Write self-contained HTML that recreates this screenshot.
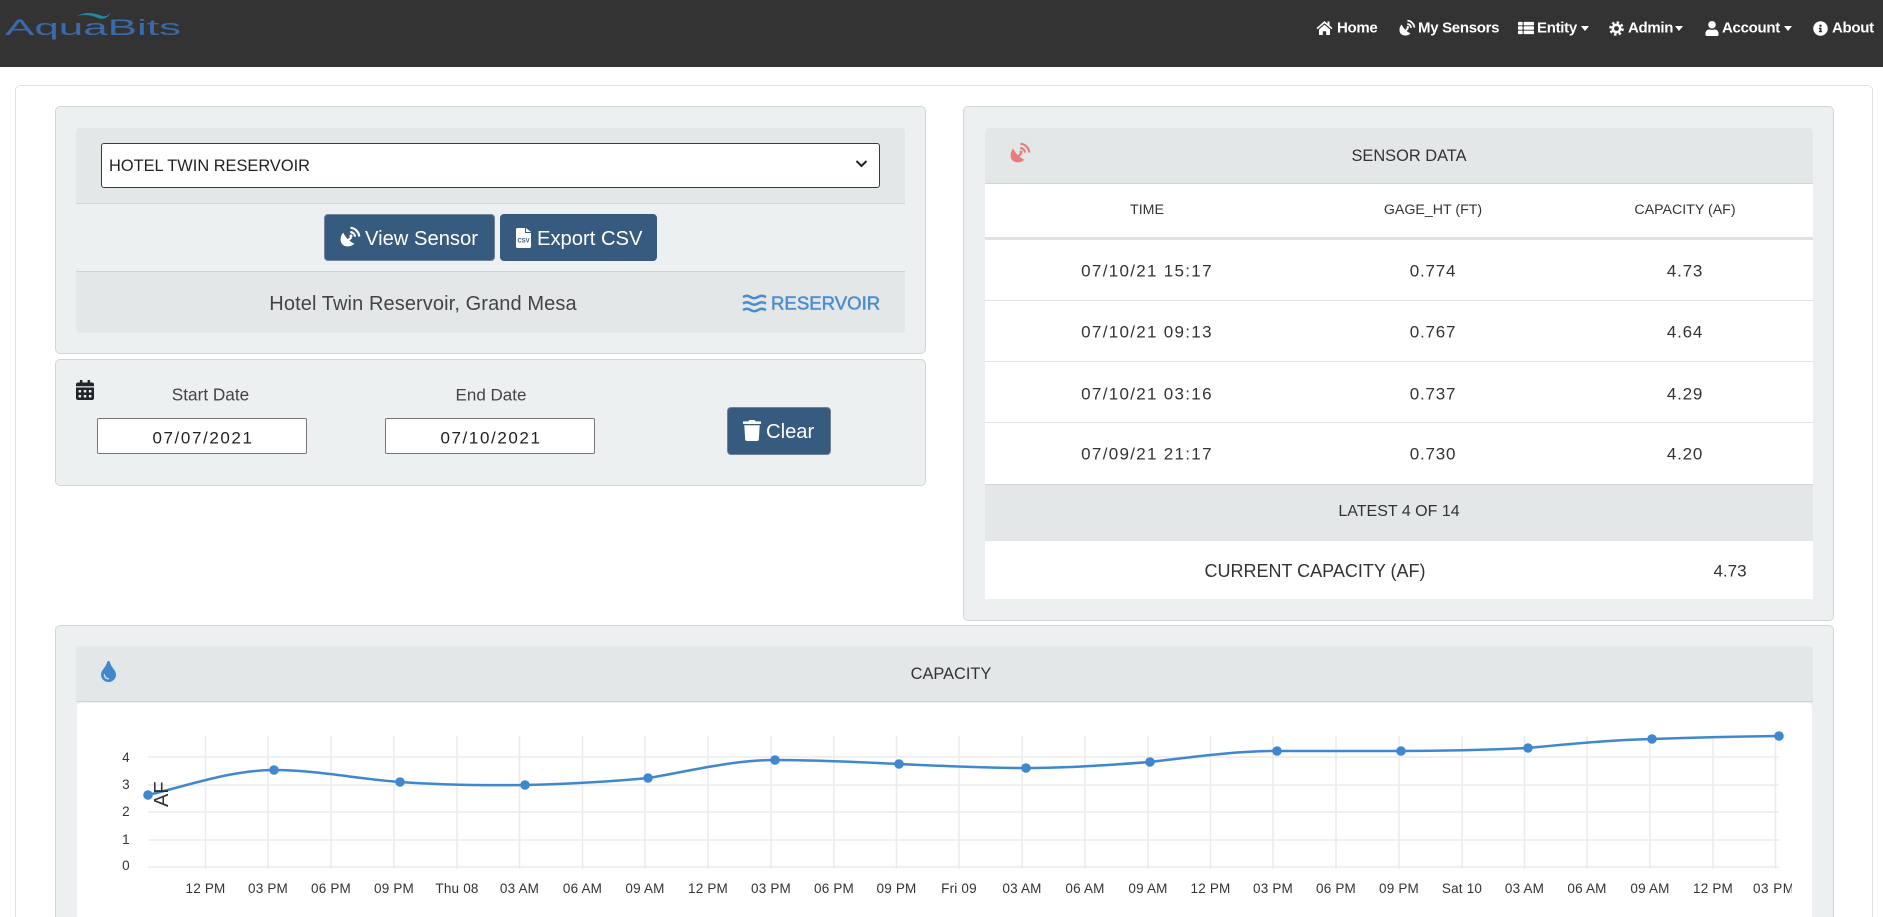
<!DOCTYPE html>
<html lang="en"><head><meta charset="utf-8"><title>AquaBits</title>
<style>
html,body{margin:0;padding:0;background:#fff;overflow:hidden;width:1883px;height:917px}
body{position:relative;font-family:"Liberation Sans",sans-serif;color:#212529}
.b{position:absolute;box-sizing:border-box}
.panel{background:#ecf0f1;border:1px solid #d2d6d8;border-radius:5px}
.gray{background:#e3e7e8}
.c{position:absolute;white-space:nowrap;transform:translate(-50%,-50%);line-height:1}
.l{position:absolute;white-space:nowrap;transform:translateY(-50%);line-height:1}
.nav{color:#fff;font-size:15px;font-weight:bold;letter-spacing:-.3px}
.btn{background:#375a7f;border:1px solid #6f8496;border-radius:4px}
.w{color:#fff;font-size:20.2px}
.inp{background:#fff;border:1px solid #767676;border-radius:2px}
.date{font-size:17px;color:#222;letter-spacing:1.6px}
.th{font-size:14.2px;color:#333}
.td{font-size:17px;color:#333;letter-spacing:1.3px}
.td2{font-size:17px;color:#333;letter-spacing:.8px}
.line{position:absolute;height:1px;background:#dee2e6;left:985px;width:828px}
svg{position:absolute;overflow:visible}
.car{position:absolute;width:0;height:0;border-left:4.5px solid transparent;border-right:4.5px solid transparent;border-top:5px solid #fff;top:26px}
</style></head><body>

<div class="b" style="left:0;top:0;width:1883px;height:67px;background:#333"></div>
<svg style="left:0;top:0" width="200" height="50" viewBox="0 0 200 50">
<text x="5" y="35" font-family="Liberation Sans" font-size="22" fill="#3b6aa8" textLength="176" lengthAdjust="spacingAndGlyphs">AquaBits</text>
<path d="M77 16C86 11 95 13 102 16C105 17 108 16 111 12C108 18 104 20 98 18C91 15 85 14 77 16Z" fill="#1f8a9e"/>
</svg>

<!-- nav icons -->
<svg style="left:1316px;top:20px" width="17" height="15" viewBox="0 0 17 15"><path d="M8.500 1L.5 8l1 1.200L8.500 3.200l7 6 1-1.200L13.500 5.400V1.500h-2v2.200zM3 9.500V15h3.800v-3.800h3.400V15H14V9.500L8.500 4.800z" fill="#fff"/></svg>
<svg style="left:1399px;top:20px" width="16" height="16" viewBox="0 0 20 20"><use href="#dish" fill="#fff" stroke="#fff"/></svg>
<svg style="left:1518px;top:21px" width="16" height="14" viewBox="0 0 512 512" preserveAspectRatio="none"><path fill="#fff" d="M149.333 216v80c0 13.255-10.745 24-24 24H24c-13.255 0-24-10.745-24-24v-80c0-13.255 10.745-24 24-24h101.333c13.255 0 24 10.745 24 24zM0 376v80c0 13.255 10.745 24 24 24h101.333c13.255 0 24-10.745 24-24v-80c0-13.255-10.745-24-24-24H24c-13.255 0-24 10.745-24 24zM125.333 32H24C10.745 32 0 42.745 0 56v80c0 13.255 10.745 24 24 24h101.333c13.255 0 24-10.745 24-24V56c0-13.255-10.745-24-24-24H24zm80 448H488c13.255 0 24-10.745 24-24v-80c0-13.255-10.745-24-24-24H205.333c-13.255 0-24 10.745-24 24v80c0 13.255 10.745 24 24 24zm-24-424v80c0 13.255 10.745 24 24 24H488c13.255 0 24-10.745 24-24V56c0-13.255-10.745-24-24-24H205.333c-13.255 0-24 10.745-24 24zm24 264H488c13.255 0 24-10.745 24-24v-80c0-13.255-10.745-24-24-24H205.333c-13.255 0-24 10.745-24 24v80c0 13.255 10.745 24 24 24z"/></svg>
<svg style="left:1609px;top:21px" width="15" height="15" viewBox="0 0 15 15"><circle cx="7.500" cy="7.500" r="6" fill="none" stroke="#fff" stroke-width="2.600" stroke-dasharray="2.400 2.312"/><circle cx="7.500" cy="7.500" r="3.700" fill="none" stroke="#fff" stroke-width="2.600"/></svg>
<svg style="left:1705px;top:21px" width="14" height="15" viewBox="0 0 448 512"><path fill="#fff" d="M224 256c70.700 0 128-57.300 128-128S294.700 0 224 0 96 57.300 96 128s57.300 128 128 128zm89.600 32h-16.700c-22.200 10.200-46.900 16-72.900 16s-50.600-5.800-72.900-16h-16.700C60.200 288 0 348.200 0 422.400V464c0 26.500 21.500 48 48 48h352c26.500 0 48-21.500 48-48v-41.600c0-74.200-60.200-134.400-134.400-134.400z"/></svg>
<svg style="left:1813px;top:21px" width="15" height="15" viewBox="0 0 512 512"><path fill="#fff" d="M256 8C119.043 8 8 119.083 8 256c0 136.997 111.043 248 248 248s248-111.003 248-248C504 119.083 392.957 8 256 8zm0 110c23.196 0 42 18.804 42 42s-18.804 42-42 42-42-18.804-42-42 18.804-42 42-42zm56 254c0 6.627-5.373 12-12 12h-88c-6.627 0-12-5.373-12-12v-24c0-6.627 5.373-12 12-12h12v-64h-12c-6.627 0-12-5.373-12-12v-24c0-6.627 5.373-12 12-12h64c6.627 0 12 5.373 12 12v100h12c6.627 0 12 5.373 12 12v24z"/></svg>
<span class="l nav" style="left:1337px;top:28px">Home</span>
<span class="l nav" style="left:1418px;top:28px">My Sensors</span>
<span class="l nav" style="left:1537px;top:28px">Entity</span><i class="car" style="left:1581px"></i>
<span class="l nav" style="left:1628px;top:28px">Admin</span><i class="car" style="left:1675px"></i>
<span class="l nav" style="left:1722px;top:28px">Account</span><i class="car" style="left:1784px"></i>
<span class="l nav" style="left:1832px;top:28px">About</span>

<!-- outer card -->
<div class="b" style="left:15px;top:85px;width:1858px;height:832px;border:1px solid #e2e2e2;border-bottom:0;border-radius:5px 5px 0 0;background:#fff"></div>

<!-- panel 1 -->
<div class="b panel" style="left:55px;top:106px;width:871px;height:248px"></div>
<div class="b gray" style="left:76px;top:128px;width:829px;height:76px;border-bottom:1px solid #ced4da;border-radius:4px 4px 0 0"></div>
<div class="b" style="left:101px;top:143px;width:779px;height:45px;background:#fff;border:1px solid #2c3e50;border-radius:3px"></div>
<span class="l" style="left:109px;top:166px;font-size:16.4px;color:#222">HOTEL TWIN RESERVOIR</span>
<svg style="left:855px;top:159px" width="13" height="10" viewBox="0 0 13 10"><path d="M1.500 2l5 5 5-5" fill="none" stroke="#222" stroke-width="2"/></svg>
<div class="b btn" style="left:324px;top:214px;width:171px;height:47px"></div>
<svg style="left:340px;top:227px" width="20" height="20" viewBox="0 0 20 20"><defs><g id="dish"><path stroke="none" d="M3.200 5.600C6 11 9 14 14.400 16.800C11 20 5.500 20.300 2.500 17.500C-.3 14.500 0 9 3.200 5.600Z"/><path fill="none" stroke-width="2.200" d="M10.500 .8C15 1 19 5 19.200 9.500M10.300 5C13 5.200 14.800 7 15 9.700"/><path stroke="none" d="M7.300 12.700l3.300-3.300 1.600 1.600-3.300 3.300z"/><circle cx="11" cy="9" r="1.500" stroke="none"/></g></defs><use href="#dish" fill="#fff" stroke="#fff"/></svg>
<span class="l w" style="left:365px;top:239px">View Sensor</span>
<div class="b btn" style="left:500px;top:214px;width:157px;height:47px;border-color:#375a7f"></div>
<svg style="left:516px;top:228px" width="15" height="20" viewBox="0 0 15 20"><path d="M0 1.500A1.500 1.500 0 0 1 1.500 0H9v5h6v13.500a1.500 1.500 0 0 1-1.500 1.500h-12A1.500 1.500 0 0 1 0 18.500zM10 0l5 4h-5z" fill="#fff"/><text x="7.500" y="14.500" text-anchor="middle" font-family="Liberation Sans" font-size="6" font-weight="bold" fill="#375a7f">CSV</text></svg>
<span class="l w" style="left:537px;top:239px">Export CSV</span>
<div class="b gray" style="left:76px;top:271px;width:829px;height:62px;border-top:1px solid #ced4da;border-radius:0 0 4px 4px"></div>
<span class="c" style="left:423px;top:304px;font-size:20px;color:#444;letter-spacing:.1px">Hotel Twin Reservoir, Grand Mesa</span>
<svg style="left:743px;top:294px" width="23" height="19" viewBox="0 0 23 19"><path d="M0 3c3.500-1.700 4.500-1.700 7.500 0s4.500 1.700 7.500 0 4.500-1.700 8 0M0 9.500c3.500-1.700 4.500-1.700 7.500 0s4.500 1.700 7.500 0 4.500-1.700 8 0M0 16c3.500-1.700 4.500-1.700 7.500 0s4.500 1.700 7.500 0 4.500-1.700 8 0" fill="none" stroke="#4a8bd0" stroke-width="2.500"/></svg>
<span class="l" style="left:771px;top:304px;font-size:18.6px;color:#4a8bd0;-webkit-text-stroke:.45px #4a8bd0">RESERVOIR</span>

<!-- panel 2 -->
<div class="b panel" style="left:55px;top:359px;width:871px;height:127px"></div>
<svg style="left:76px;top:380px" width="18" height="20" viewBox="0 0 448 512" preserveAspectRatio="none"><path fill="#212529" d="M0 464c0 26.500 21.500 48 48 48h352c26.500 0 48-21.500 48-48V192H0v272zm320-196c0-6.600 5.400-12 12-12h40c6.600 0 12 5.400 12 12v40c0 6.600-5.400 12-12 12h-40c-6.600 0-12-5.400-12-12v-40zm0 128c0-6.600 5.400-12 12-12h40c6.600 0 12 5.400 12 12v40c0 6.600-5.400 12-12 12h-40c-6.600 0-12-5.400-12-12v-40zM192 268c0-6.600 5.400-12 12-12h40c6.600 0 12 5.400 12 12v40c0 6.600-5.400 12-12 12h-40c-6.600 0-12-5.400-12-12v-40zm0 128c0-6.600 5.400-12 12-12h40c6.600 0 12 5.400 12 12v40c0 6.600-5.400 12-12 12h-40c-6.600 0-12-5.400-12-12v-40zM64 268c0-6.600 5.400-12 12-12h40c6.600 0 12 5.400 12 12v40c0 6.600-5.400 12-12 12H76c-6.600 0-12-5.400-12-12v-40zm0 128c0-6.600 5.400-12 12-12h40c6.600 0 12 5.400 12 12v40c0 6.600-5.400 12-12 12H76c-6.600 0-12-5.400-12-12v-40zM400 64h-48V16c0-8.800-7.200-16-16-16h-32c-8.800 0-16 7.200-16 16v48H160V16c0-8.800-7.200-16-16-16h-32c-8.800 0-16 7.200-16 16v48H48C21.500 64 0 85.500 0 112v48h448v-48c0-26.500-21.500-48-48-48z"/></svg>
<span class="c" style="left:210.500px;top:395px;font-size:17.200px;color:#444">Start Date</span>
<span class="c" style="left:491px;top:395px;font-size:17px;color:#444">End Date</span>
<div class="b inp" style="left:97px;top:418px;width:210px;height:36px"></div>
<span class="c date" style="left:203px;top:438px">07/07/2021</span>
<div class="b inp" style="left:385px;top:418px;width:210px;height:36px"></div>
<span class="c date" style="left:491px;top:438px">07/10/2021</span>
<div class="b btn" style="left:727px;top:407px;width:104px;height:48px"></div>
<svg style="left:743px;top:420px" width="18" height="21" viewBox="0 0 448 512" preserveAspectRatio="none"><path fill="#fff" d="M432 32H312l-9.400-18.700A24 24 0 0 0 281.100 0H166.800a23.720 23.720 0 0 0-21.400 13.300L136 32H16A16 16 0 0 0 0 48v32a16 16 0 0 0 16 16h416a16 16 0 0 0 16-16V48a16 16 0 0 0-16-16zM53.200 467a48 48 0 0 0 47.900 45h245.800a48 48 0 0 0 47.900-45L416 128H32z"/></svg>
<span class="l w" style="left:766px;top:432px">Clear</span>

<!-- panel 3: sensor data -->
<div class="b panel" style="left:963px;top:106px;width:871px;height:515px"></div>
<div class="b gray" style="left:985px;top:128px;width:828px;height:56px;border-bottom:1px solid #ced4da;border-radius:4px 4px 0 0"></div>
<div class="b" style="left:985px;top:184px;width:828px;height:415px;background:#fff"></div>
<svg style="left:1010px;top:143px" width="20" height="20" viewBox="0 0 20 20"><use href="#dish" fill="#e67c7c" stroke="#e67c7c"/></svg>
<span class="c" style="left:1409px;top:156px;font-size:16.4px;color:#333">SENSOR DATA</span>
<span class="c th" style="left:1147px;top:210px">TIME</span>
<span class="c th" style="left:1433px;top:210px">GAGE_HT (FT)</span>
<span class="c th" style="left:1685px;top:210px">CAPACITY (AF)</span>
<div class="line" style="top:237px;height:3px"></div>
<span class="c td" style="left:1147px;top:271px">07/10/21 15:17</span><span class="c td2" style="left:1433px;top:271px">0.774</span><span class="c td2" style="left:1685px;top:271px">4.73</span>
<div class="line" style="top:300px"></div>
<span class="c td" style="left:1147px;top:332px">07/10/21 09:13</span><span class="c td2" style="left:1433px;top:332px">0.767</span><span class="c td2" style="left:1685px;top:332px">4.64</span>
<div class="line" style="top:361px"></div>
<span class="c td" style="left:1147px;top:394px">07/10/21 03:16</span><span class="c td2" style="left:1433px;top:394px">0.737</span><span class="c td2" style="left:1685px;top:394px">4.29</span>
<div class="line" style="top:422px"></div>
<span class="c td" style="left:1147px;top:454px">07/09/21 21:17</span><span class="c td2" style="left:1433px;top:454px">0.730</span><span class="c td2" style="left:1685px;top:454px">4.20</span>
<div class="b gray" style="left:985px;top:484px;width:828px;height:57px;border-top:1px solid #ced4da"></div>
<span class="c" style="left:1399px;top:512px;font-size:16px;color:#333">LATEST 4 OF 14</span>
<span class="c" style="left:1315px;top:571px;font-size:18px;color:#333">CURRENT CAPACITY (AF)</span>
<span class="c" style="left:1730px;top:571px;font-size:17px;color:#333">4.73</span>

<!-- panel 4: chart -->
<div class="b panel" style="left:55px;top:625px;width:1779px;height:292px;border-bottom:0;border-radius:5px 5px 0 0"></div>
<div class="b gray" style="left:76px;top:646px;width:1737px;height:56px;border-bottom:1px solid #ced4da;border-radius:4px 4px 0 0"></div>
<div class="b" style="left:77px;top:703px;width:1735px;height:214px;background:#fff;border-radius:4px 4px 0 0"></div>
<svg style="left:101px;top:661px" width="15" height="21" viewBox="0 0 352 512" preserveAspectRatio="none"><path fill="#3f88ce" d="M205.220 22.090c-7.940-28.780-49.440-30.120-58.440 0C100.010 179.850 0 222.720 0 333.910 0 432.350 78.720 512 176 512s176-79.650 176-178.090c0-111.750-99.790-153.340-146.780-311.820zM176 448c-61.750 0-112-50.250-112-112 0-8.840 7.160-16 16-16s16 7.160 16 16c0 44.110 35.890 80 80 80 8.840 0 16 7.160 16 16s-7.160 16-16 16z"/></svg>
<span class="c" style="left:951px;top:674px;font-size:16.4px;color:#333">CAPACITY</span>

<svg style="left:0;top:0;overflow:hidden" width="1883" height="917" viewBox="0 0 1883 917" font-family="Liberation Sans">
<g stroke="#ebebeb" stroke-width="1.500" fill="none">
<path d="M148 757H1779M148 785H1779M148 812H1779M148 840H1779M148 867H1779"/>
<path d="M205.500 736V869M268 736V869M331 736V869M394 736V869M457 736V869M519.500 736V869M582.500 736V869M645 736V869M708 736V869M771 736V869M834 736V869M896.500 736V869M959 736V869M1022 736V869M1085 736V869M1148 736V869M1210.500 736V869M1273 736V869M1336 736V869M1399 736V869M1462 736V869M1524.500 736V869M1587 736V869M1650 736V869M1713 736V869M1775.500 736V869"/>
</g>
<g font-size="13.500" fill="#333" text-anchor="middle" letter-spacing=".2">
<text x="126" y="762">4</text><text x="126" y="789">3</text><text x="126" y="816">2</text><text x="126" y="844">1</text><text x="126" y="870">0</text>
<text x="205.500" y="893">12 PM</text><text x="268" y="893">03 PM</text><text x="331" y="893">06 PM</text><text x="394" y="893">09 PM</text><text x="457" y="893">Thu 08</text><text x="519.500" y="893">03 AM</text><text x="582.500" y="893">06 AM</text><text x="645" y="893">09 AM</text><text x="708" y="893">12 PM</text><text x="771" y="893">03 PM</text><text x="834" y="893">06 PM</text><text x="896.500" y="893">09 PM</text><text x="959" y="893">Fri 09</text><text x="1022" y="893">03 AM</text><text x="1085" y="893">06 AM</text><text x="1148" y="893">09 AM</text><text x="1210.500" y="893">12 PM</text><text x="1273" y="893">03 PM</text><text x="1336" y="893">06 PM</text><text x="1399" y="893">09 PM</text><text x="1462" y="893">Sat 10</text><text x="1524.500" y="893">03 AM</text><text x="1587" y="893">06 AM</text><text x="1650" y="893">09 AM</text><text x="1713" y="893">12 PM</text>
</g>
<svg x="1740" y="870" width="52" height="40" style="position:static;overflow:hidden"><text x="13" y="23" font-size="13.500" fill="#333" letter-spacing=".5">03 PM</text></svg>
<path fill="none" stroke="#3f88ce" stroke-width="2.500" d="M148 795C190 785 232 770 274 770C316 770 358 779 400 782C442 785 483 785.500 525 785C566 784 607 782 648 778C690 771 733 760 775 760C816 760 858 762 899 764C941 766 984 768 1026 768C1067 768 1109 765 1150 762C1192 757 1235 751 1277 751C1318 751 1360 751 1401 751C1443 751 1486 750 1528 748C1569 744 1611 740 1652 739C1694 737.500 1737 736.500 1779 736"/>
<g fill="#3f88ce"><circle cx="148" cy="795" r="4.800"/><circle cx="274" cy="770" r="4.800"/><circle cx="400" cy="782" r="4.800"/><circle cx="525" cy="785" r="4.800"/><circle cx="648" cy="778" r="4.800"/><circle cx="775" cy="760" r="4.800"/><circle cx="899" cy="764" r="4.800"/><circle cx="1026" cy="768" r="4.800"/><circle cx="1150" cy="762" r="4.800"/><circle cx="1277" cy="751" r="4.800"/><circle cx="1401" cy="751" r="4.800"/><circle cx="1528" cy="748" r="4.800"/><circle cx="1652" cy="739" r="4.800"/><circle cx="1779" cy="736" r="4.800"/></g>
<text transform="translate(168 807) rotate(-90)" font-size="20" fill="#333">AF</text>
</svg>
</body></html>
